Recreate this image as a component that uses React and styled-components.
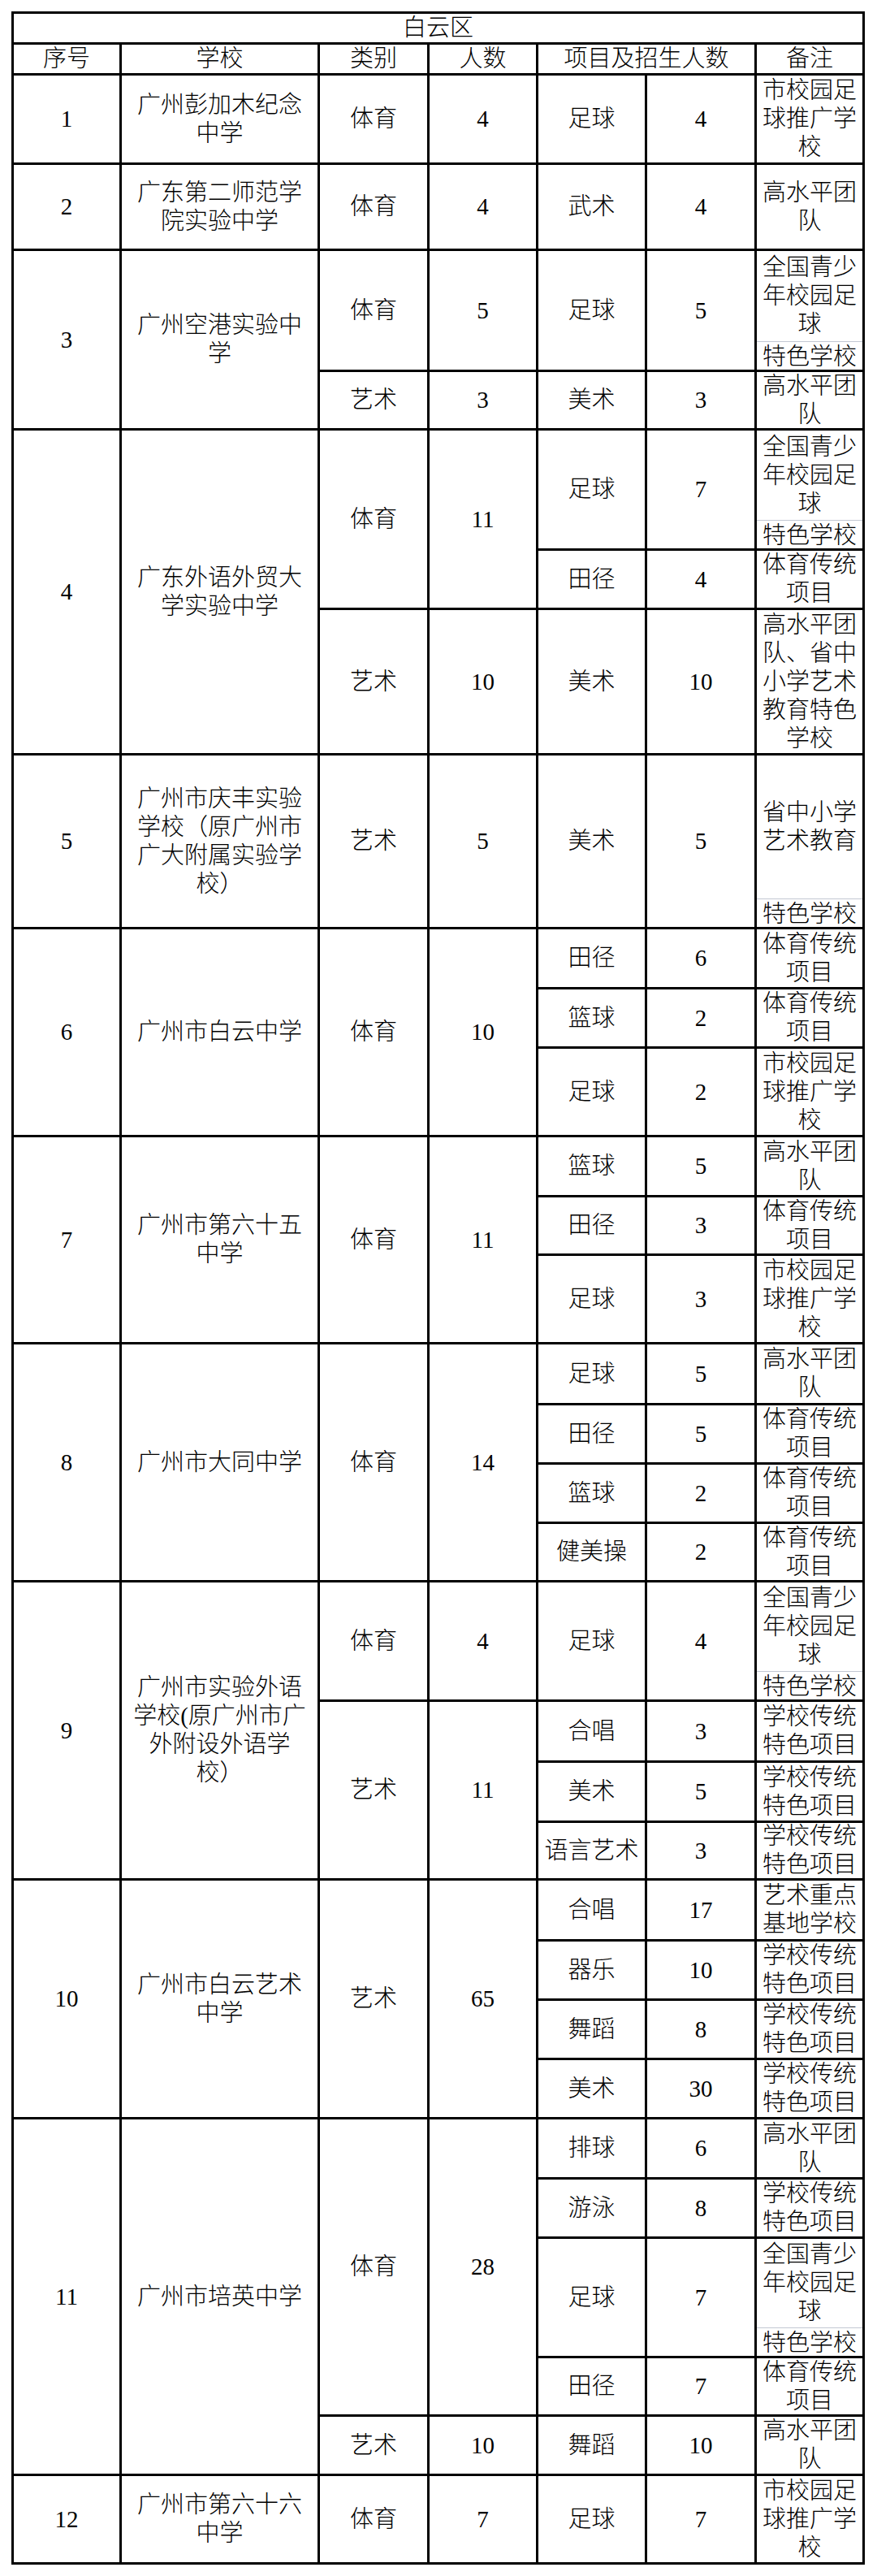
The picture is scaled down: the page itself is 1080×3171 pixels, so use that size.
import React from "react";
import styled, { createGlobalStyle } from "styled-components";

const GlobalStyle = createGlobalStyle`
  body {
    margin: 0;
    background: #fff;
    color: #000;
    font-family: "Liberation Serif", "Noto Sans CJK SC", serif;
  }
`;

// 白云区 招生名单
const schools = [
  {
    no: 1,
    name: "广州彭加木纪念\n中学",
    groups: [
      { type: "体育", count: 4, items: [{ sport: "足球", n: 4, note: "市校园足\n球推广学\n校", h: 107 }] },
    ],
  },
  {
    no: 2,
    name: "广东第二师范学\n院实验中学",
    groups: [{ type: "体育", count: 4, items: [{ sport: "武术", n: 4, note: "高水平团\n队", h: 103 }] }],
  },
  {
    no: 3,
    name: "广州空港实验中\n学",
    groups: [
      {
        type: "体育",
        count: 5,
        items: [{ sport: "足球", n: 5, note: "全国青少\n年校园足\n球", tail: "特色学校", h: 146 }],
      },
      { type: "艺术", count: 3, items: [{ sport: "美术", n: 3, note: "高水平团\n队", h: 69 }] },
    ],
  },
  {
    no: 4,
    name: "广东外语外贸大\n学实验中学",
    groups: [
      {
        type: "体育",
        count: 11,
        items: [
          { sport: "足球", n: 7, note: "全国青少\n年校园足\n球", tail: "特色学校", h: 145 },
          { sport: "田径", n: 4, note: "体育传统\n项目", h: 70 },
        ],
      },
      {
        type: "艺术",
        count: 10,
        items: [{ sport: "美术", n: 10, note: "高水平团\n队、省中\n小学艺术\n教育特色\n学校", h: 176 }],
      },
    ],
  },
  {
    no: 5,
    name: "广州市庆丰实验\n学校（原广州市\n广大附属实验学\n校）",
    groups: [
      {
        type: "艺术",
        count: 5,
        items: [{ sport: "美术", n: 5, note: "省中小学\n艺术教育", tail: "特色学校", h: 211 }],
      },
    ],
  },
  {
    no: 6,
    name: "广州市白云中学",
    groups: [
      {
        type: "体育",
        count: 10,
        items: [
          { sport: "田径", n: 6, note: "体育传统\n项目", h: 71 },
          { sport: "篮球", n: 2, note: "体育传统\n项目", h: 70 },
          { sport: "足球", n: 2, note: "市校园足\n球推广学\n校", h: 106 },
        ],
      },
    ],
  },
  {
    no: 7,
    name: "广州市第六十五\n中学",
    groups: [
      {
        type: "体育",
        count: 11,
        items: [
          { sport: "篮球", n: 5, note: "高水平团\n队", h: 71 },
          { sport: "田径", n: 3, note: "体育传统\n项目", h: 69 },
          { sport: "足球", n: 3, note: "市校园足\n球推广学\n校", h: 106 },
        ],
      },
    ],
  },
  {
    no: 8,
    name: "广州市大同中学",
    groups: [
      {
        type: "体育",
        count: 14,
        items: [
          { sport: "足球", n: 5, note: "高水平团\n队", h: 72 },
          { sport: "田径", n: 5, note: "体育传统\n项目", h: 70 },
          { sport: "篮球", n: 2, note: "体育传统\n项目", h: 70 },
          { sport: "健美操", n: 2, note: "体育传统\n项目", h: 69 },
        ],
      },
    ],
  },
  {
    no: 9,
    name: "广州市实验外语\n学校(原广州市广\n外附设外语学\n校）",
    groups: [
      {
        type: "体育",
        count: 4,
        items: [{ sport: "足球", n: 4, note: "全国青少\n年校园足\n球", tail: "特色学校", h: 144 }],
      },
      {
        type: "艺术",
        count: 11,
        items: [
          { sport: "合唱", n: 3, note: "学校传统\n特色项目", h: 72 },
          { sport: "美术", n: 5, note: "学校传统\n特色项目", h: 71 },
          { sport: "语言艺术", n: 3, note: "学校传统\n特色项目", h: 68 },
        ],
      },
    ],
  },
  {
    no: 10,
    name: "广州市白云艺术\n中学",
    groups: [
      {
        type: "艺术",
        count: 65,
        items: [
          { sport: "合唱", n: 17, note: "艺术重点\n基地学校", h: 72 },
          { sport: "器乐", n: 10, note: "学校传统\n特色项目", h: 70 },
          { sport: "舞蹈", n: 8, note: "学校传统\n特色项目", h: 70 },
          { sport: "美术", n: 30, note: "学校传统\n特色项目", h: 70 },
        ],
      },
    ],
  },
  {
    no: 11,
    name: "广州市培英中学",
    groups: [
      {
        type: "体育",
        count: 28,
        items: [
          { sport: "排球", n: 6, note: "高水平团\n队", h: 71 },
          { sport: "游泳", n: 8, note: "学校传统\n特色项目", h: 70 },
          { sport: "足球", n: 7, note: "全国青少\n年校园足\n球", tail: "特色学校", h: 144 },
          { sport: "田径", n: 7, note: "体育传统\n项目", h: 69 },
        ],
      },
      { type: "艺术", count: 10, items: [{ sport: "舞蹈", n: 10, note: "高水平团\n队", h: 70 }] },
    ],
  },
  {
    no: 12,
    name: "广州市第六十六\n中学",
    groups: [
      { type: "体育", count: 7, items: [{ sport: "足球", n: 7, note: "市校园足\n球推广学\n校", h: 106 }] },
    ],
  },
];

const headers = [
  { label: "序号", col: 1 },
  { label: "学校", col: 2 },
  { label: "类别", col: 3 },
  { label: "人数", col: 4 },
  { label: "项目及招生人数", col: 5, span: 2 },
  { label: "备注", col: 7 },
];

const Page = styled.div`
  padding: 14px 0 14px 14px;
`;

const Sheet = styled.div`
  display: grid;
  width: max-content;
  grid-template-columns: 130px 241px 132px 131px 131px 132px 130px;
  grid-template-rows: ${(p) => p.$rows};
  gap: 3px;
  padding: 3px;
  background: #000;
`;

const Cell = styled.div`
  grid-column: ${(p) => p.$col} / span ${(p) => p.$colSpan || 1};
  grid-row: ${(p) => p.$row} / span ${(p) => p.$rowSpan || 1};
  display: flex;
  align-items: center;
  justify-content: center;
  background: #fff;
  font-size: 29px;
  font-weight: 300;
  line-height: 35px;
  text-align: center;
  white-space: pre-line;
  overflow: hidden;
`;

const TitleCell = styled(Cell)`
  align-items: flex-end;
`;

const NoteCell = styled(Cell)`
  flex-direction: column;
  align-items: stretch;
  justify-content: ${(p) => (p.$split ? "stretch" : "center")};
`;

const NoteMain = styled.div`
  flex: 1;
  display: flex;
  align-items: center;
  justify-content: center;
`;

const NoteTail = styled.div`
  height: 34px;
  border-top: 1px solid #c3c8d3;
  line-height: 36px;
`;

export default function App() {
  const rowHeights = [35, 35];
  const cells = [];
  let row = 3;

  schools.forEach((s) => {
    const schoolSpan = s.groups.reduce((t, g) => t + g.items.length, 0);
    cells.push(
      <Cell key={`no-${s.no}`} $col={1} $row={row} $rowSpan={schoolSpan}>
        {s.no}
      </Cell>,
      <Cell key={`name-${s.no}`} $col={2} $row={row} $rowSpan={schoolSpan}>
        {s.name}
      </Cell>
    );
    s.groups.forEach((g, gi) => {
      const span = g.items.length;
      cells.push(
        <Cell key={`type-${s.no}-${gi}`} $col={3} $row={row} $rowSpan={span}>
          {g.type}
        </Cell>,
        <Cell key={`count-${s.no}-${gi}`} $col={4} $row={row} $rowSpan={span}>
          {g.count}
        </Cell>
      );
      g.items.forEach((it, ii) => {
        const k = `${s.no}-${gi}-${ii}`;
        rowHeights.push(it.h);
        cells.push(
          <Cell key={`sport-${k}`} $col={5} $row={row}>
            {it.sport}
          </Cell>,
          <Cell key={`n-${k}`} $col={6} $row={row}>
            {it.n}
          </Cell>,
          <NoteCell key={`note-${k}`} $col={7} $row={row} $split={!!it.tail}>
            <NoteMain>{it.note}</NoteMain>
            {it.tail && <NoteTail>{it.tail}</NoteTail>}
          </NoteCell>
        );
        row += 1;
      });
    });
  });

  return (
    <Page>
      <GlobalStyle />
      <Sheet $rows={rowHeights.map((h) => `${h}px`).join(" ")}>
        <TitleCell $col={1} $colSpan={7} $row={1}>
          白云区
        </TitleCell>
        {headers.map((h) => (
          <TitleCell key={h.label} $col={h.col} $colSpan={h.span} $row={2}>
            {h.label}
          </TitleCell>
        ))}
        {cells}
      </Sheet>
    </Page>
  );
}
